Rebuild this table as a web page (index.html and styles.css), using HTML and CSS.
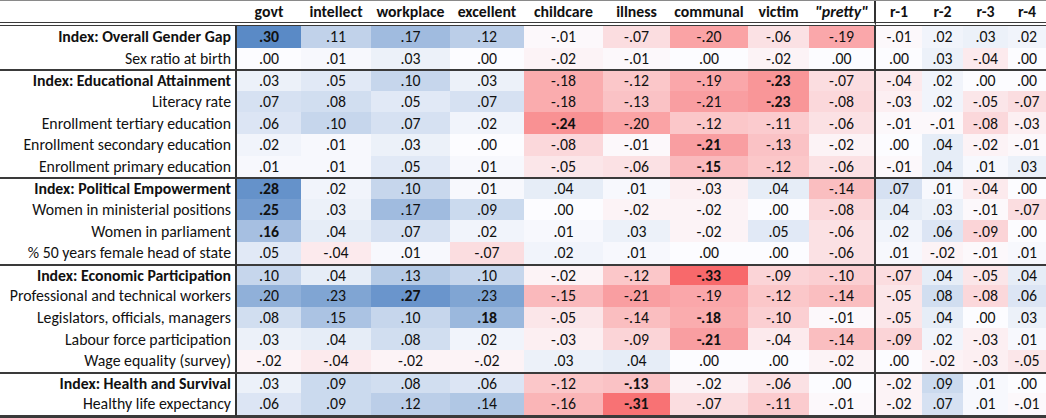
FILE: index.html
```html
<!DOCTYPE html>
<html>
<head>
<meta charset="utf-8">
<link rel="stylesheet" href="styles.css">
</head>
<body>
<table class="grid">
<colgroup>
<col class="c-label"><col class="c-govt"><col class="c-intellect"><col class="c-workplace"><col class="c-excellent"><col class="c-childcare"><col class="c-illness"><col class="c-communal"><col class="c-victim"><col class="c-pretty"><col class="c-r1"><col class="c-r2"><col class="c-r3"><col class="c-r4">
</colgroup>
<thead>
<tr class="head"><th class="label"></th><th>govt</th><th>intellect</th><th>workplace</th><th>excellent</th><th>childcare</th><th>illness</th><th>communal</th><th>victim</th><th class="split"><i>"pretty"</i></th><th>r-1</th><th>r-2</th><th>r-3</th><th>r-4</th></tr>
</thead>
<tbody>
<tr class="index"><td class="label">Index: Overall Gender Gap</td><td class="n b">.30</td><td class="n">.11</td><td class="n">.17</td><td class="n">.12</td><td class="n">-.01</td><td class="n">-.07</td><td class="n">-.20</td><td class="n">-.06</td><td class="n split">-.19</td><td class="n">-.01</td><td class="n">.02</td><td class="n">.03</td><td class="n">.02</td></tr>
<tr><td class="label">Sex ratio at birth</td><td class="n">.00</td><td class="n">.01</td><td class="n">.03</td><td class="n">.00</td><td class="n">-.02</td><td class="n">-.01</td><td class="n">.00</td><td class="n">-.02</td><td class="n split">.00</td><td class="n">.00</td><td class="n">.03</td><td class="n">-.04</td><td class="n">.00</td></tr>
<tr class="index group"><td class="label">Index: Educational Attainment</td><td class="n">.03</td><td class="n">.05</td><td class="n">.10</td><td class="n">.03</td><td class="n">-.18</td><td class="n">-.12</td><td class="n">-.19</td><td class="n b">-.23</td><td class="n split">-.07</td><td class="n">-.04</td><td class="n">.02</td><td class="n">.00</td><td class="n">.00</td></tr>
<tr><td class="label">Literacy rate</td><td class="n">.07</td><td class="n">.08</td><td class="n">.05</td><td class="n">.07</td><td class="n">-.18</td><td class="n">-.13</td><td class="n">-.21</td><td class="n b">-.23</td><td class="n split">-.08</td><td class="n">-.03</td><td class="n">.02</td><td class="n">-.05</td><td class="n">-.07</td></tr>
<tr><td class="label">Enrollment tertiary education</td><td class="n">.06</td><td class="n">.10</td><td class="n">.07</td><td class="n">.02</td><td class="n b">-.24</td><td class="n">-.20</td><td class="n">-.12</td><td class="n">-.11</td><td class="n split">-.06</td><td class="n">-.01</td><td class="n">-.01</td><td class="n">-.08</td><td class="n">-.03</td></tr>
<tr><td class="label">Enrollment secondary education</td><td class="n">.02</td><td class="n">.01</td><td class="n">.03</td><td class="n">.00</td><td class="n">-.08</td><td class="n">-.01</td><td class="n b">-.21</td><td class="n">-.13</td><td class="n split">-.02</td><td class="n">.00</td><td class="n">.04</td><td class="n">-.02</td><td class="n">-.01</td></tr>
<tr><td class="label">Enrollment primary education</td><td class="n">.01</td><td class="n">.01</td><td class="n">.05</td><td class="n">.01</td><td class="n">-.05</td><td class="n">-.06</td><td class="n b">-.15</td><td class="n">-.12</td><td class="n split">-.06</td><td class="n">-.01</td><td class="n">.04</td><td class="n">.01</td><td class="n">.03</td></tr>
<tr class="index group"><td class="label">Index: Political Empowerment</td><td class="n b">.28</td><td class="n">.02</td><td class="n">.10</td><td class="n">.01</td><td class="n">.04</td><td class="n">.01</td><td class="n">-.03</td><td class="n">.04</td><td class="n split">-.14</td><td class="n">.07</td><td class="n">.01</td><td class="n">-.04</td><td class="n">.00</td></tr>
<tr><td class="label">Women in ministerial positions</td><td class="n b">.25</td><td class="n">.03</td><td class="n">.17</td><td class="n">.09</td><td class="n">.00</td><td class="n">-.02</td><td class="n">-.02</td><td class="n">.00</td><td class="n split">-.08</td><td class="n">.04</td><td class="n">.03</td><td class="n">-.01</td><td class="n">-.07</td></tr>
<tr><td class="label">Women in parliament</td><td class="n b">.16</td><td class="n">.04</td><td class="n">.07</td><td class="n">.02</td><td class="n">.01</td><td class="n">.03</td><td class="n">-.02</td><td class="n">.05</td><td class="n split">-.06</td><td class="n">.02</td><td class="n">.06</td><td class="n">-.09</td><td class="n">.00</td></tr>
<tr><td class="label">% 50 years female head of state</td><td class="n">.05</td><td class="n">-.04</td><td class="n">.01</td><td class="n">-.07</td><td class="n">.02</td><td class="n">.01</td><td class="n">.00</td><td class="n">.00</td><td class="n split">-.06</td><td class="n">.01</td><td class="n">-.02</td><td class="n">-.01</td><td class="n">.01</td></tr>
<tr class="index group"><td class="label">Index: Economic Participation</td><td class="n">.10</td><td class="n">.04</td><td class="n">.13</td><td class="n">.10</td><td class="n">-.02</td><td class="n">-.12</td><td class="n b">-.33</td><td class="n">-.09</td><td class="n split">-.10</td><td class="n">-.07</td><td class="n">.04</td><td class="n">-.05</td><td class="n">.04</td></tr>
<tr><td class="label">Professional and technical workers</td><td class="n">.20</td><td class="n">.23</td><td class="n b">.27</td><td class="n">.23</td><td class="n">-.15</td><td class="n">-.21</td><td class="n">-.19</td><td class="n">-.12</td><td class="n split">-.14</td><td class="n">-.05</td><td class="n">.08</td><td class="n">-.08</td><td class="n">.06</td></tr>
<tr><td class="label">Legislators, officials, managers</td><td class="n">.08</td><td class="n">.15</td><td class="n">.10</td><td class="n b">.18</td><td class="n">-.05</td><td class="n">-.14</td><td class="n b">-.18</td><td class="n">-.10</td><td class="n split">-.01</td><td class="n">-.05</td><td class="n">.04</td><td class="n">.00</td><td class="n">.03</td></tr>
<tr><td class="label">Labour force participation</td><td class="n">.03</td><td class="n">.04</td><td class="n">.08</td><td class="n">.02</td><td class="n">-.03</td><td class="n">-.09</td><td class="n b">-.21</td><td class="n">-.04</td><td class="n split">-.14</td><td class="n">-.09</td><td class="n">.02</td><td class="n">-.03</td><td class="n">.01</td></tr>
<tr><td class="label">Wage equality (survey)</td><td class="n">-.02</td><td class="n">-.04</td><td class="n">-.02</td><td class="n">-.02</td><td class="n">.03</td><td class="n">.04</td><td class="n">.00</td><td class="n">.00</td><td class="n split">-.02</td><td class="n">.00</td><td class="n">-.02</td><td class="n">-.03</td><td class="n">-.05</td></tr>
<tr class="index group"><td class="label">Index: Health and Survival</td><td class="n">.03</td><td class="n">.09</td><td class="n">.08</td><td class="n">.06</td><td class="n">-.12</td><td class="n b">-.13</td><td class="n">-.02</td><td class="n">-.06</td><td class="n split">.00</td><td class="n">-.02</td><td class="n">.09</td><td class="n">.01</td><td class="n">.00</td></tr>
<tr class="last"><td class="label">Healthy life expectancy</td><td class="n">.06</td><td class="n">.09</td><td class="n">.12</td><td class="n">.14</td><td class="n">-.16</td><td class="n b">-.31</td><td class="n">-.07</td><td class="n">-.11</td><td class="n split">-.01</td><td class="n">-.02</td><td class="n">.07</td><td class="n">.01</td><td class="n">-.01</td></tr>
</tbody>
</table>
<script src="script.js"></script>
</body>
</html>
```
FILE: styles.css
```css
html, body {
  margin: 0;
  padding: 0;
  background: #fff;
}
body {
  font-family: Carlito, Calibri, Lato, "Liberation Sans", sans-serif;
  font-size: 15.8px;
  color: #111;
}
.grid {
  width: 1046px;
  table-layout: fixed;
  border-collapse: separate;
  border-spacing: 0;
  border-top: 1px solid #8a8a8a;
}
.c-label { width: 237px; }
.c-govt { width: 64px; }
.c-intellect { width: 70px; }
.c-workplace { width: 79px; }
.c-excellent { width: 74px; }
.c-childcare { width: 79px; }
.c-illness { width: 67px; }
.c-communal { width: 78px; }
.c-victim { width: 61px; }
.c-pretty { width: 67px; }
.c-r1 { width: 46px; }
.c-r2 { width: 41px; }
.c-r3 { width: 45px; }
.c-r4 { width: 38px; }

.grid th, .grid td {
  padding: 0;
  box-sizing: border-box;
  white-space: nowrap;
  overflow: hidden;
}
.head th {
  height: 25px;
  font-weight: bold;
  text-align: center;
  vertical-align: top;
  padding-top: 1px;
  border-bottom: 4px double #3a3a3a;
}
.head th i { font-style: italic; }
.grid td {
  height: 21.6px;
  text-align: center;
  vertical-align: middle;
}
.grid td.label {
  text-align: right;
  padding-right: 4px;
  border-right: 2px solid #333;
}
.index td.label { font-weight: bold; }
.grid .split { border-right: 2px solid #333; }
.head th.split { border-right: 2px solid #333; }
.group td { border-top: 2px solid #3a3a3a; }
.last td { border-bottom: 3px solid #3a3a3a; height: 24.6px; }
.n.b { font-weight: bold; }
```
FILE: script.js
```js
(function () {
  var white = [252, 252, 255];
  var blue = [90, 138, 198];
  var red = [248, 105, 107];
  function mix(a, b, t) {
    return 'rgb(' + a.map(function (x, i) { return Math.round(x + (b[i] - x) * t); }).join(',') + ')';
  }
  document.querySelectorAll('td.n').forEach(function (td) {
    var v = parseFloat(td.textContent.replace('-.', '-0.').replace(/^\./, '0.'));
    var c;
    if (v > 0) c = mix(white, blue, Math.min(v / 0.30, 1));
    else if (v < 0) c = mix(white, red, Math.min(-v / 0.33, 1));
    else c = mix(white, white, 0);
    td.style.backgroundColor = c;
  });
})();
```
